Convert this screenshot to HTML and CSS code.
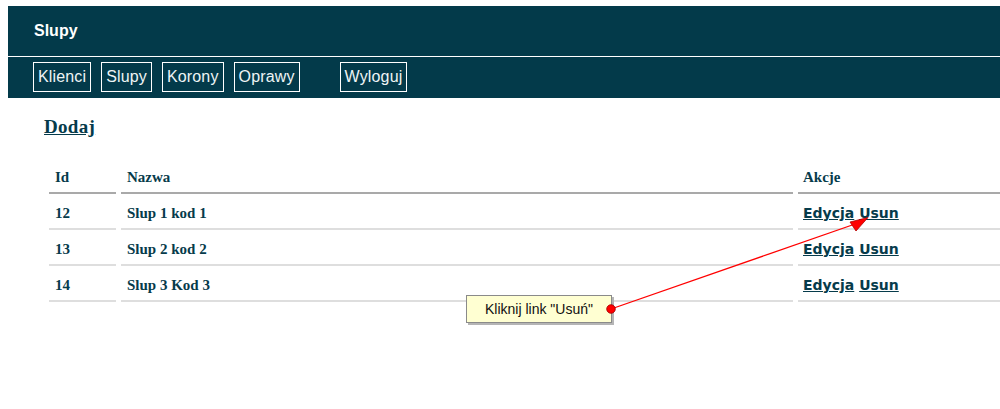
FILE: index.html
```html
<!DOCTYPE html>
<html lang="pl">
<head>
<meta charset="utf-8">
<title>Slupy</title>
<link rel="stylesheet" href="styles.css">
</head>
<body>
<div class="page">
  <header class="top">
    <div class="title">Slupy</div>
    <nav class="nav">
      <a class="nav-btn" href="#">Klienci</a>
      <a class="nav-btn" href="#">Slupy</a>
      <a class="nav-btn" href="#">Korony</a>
      <a class="nav-btn" href="#">Oprawy</a>
      <a class="nav-btn nav-logout" href="#">Wyloguj</a>
    </nav>
  </header>
  <main class="content">
    <a class="add-link" href="#">Dodaj</a>
    <table class="grid">
      <thead>
        <tr>
          <th class="col-id">Id</th>
          <th class="col-name">Nazwa</th>
          <th class="col-act">Akcje</th>
        </tr>
      </thead>
      <tbody>
        <tr>
          <td>12</td>
          <td>Slup 1 kod 1</td>
          <td class="acts"><a href="#">Edycja</a> <a href="#">Usun</a></td>
        </tr>
        <tr>
          <td>13</td>
          <td>Slup 2 kod 2</td>
          <td class="acts"><a href="#">Edycja</a> <a href="#">Usun</a></td>
        </tr>
        <tr>
          <td>14</td>
          <td>Slup 3 Kod 3</td>
          <td class="acts"><a href="#">Edycja</a> <a href="#">Usun</a></td>
        </tr>
      </tbody>
    </table>
  </main>
</div>

<div class="callout">Kliknij link "Usuń"</div>
<svg class="pointer" width="1000" height="409" viewBox="0 0 1000 409" xmlns="http://www.w3.org/2000/svg">
  <line x1="611" y1="309" x2="858" y2="223" stroke="#ff0000" stroke-width="1.3"/>
  <polygon points="868,217.5 850,222 856,231" fill="#ff0000" stroke="#b00000" stroke-width="0.8"/>
  <circle cx="611" cy="309" r="4.3" fill="#ff0000" stroke="#a00000" stroke-width="0.8"/>
</svg>
</body>
</html>
```

FILE: styles.css
```css
html {
  overflow: hidden;
}

body {
  margin: 6px 0 0 8px;
  background: #ffffff;
  font-family: "Liberation Sans", Arial, sans-serif;
}

.page {
  overflow: hidden;
}

.top {
  background: #033a4a;
  color: #ffffff;
}

.title {
  height: 50px;
  line-height: 50px;
  padding-left: 26px;
  font-size: 16px;
  font-weight: bold;
  border-bottom: 1px solid #ffffff;
}

.nav {
  display: flex;
  gap: 10px;
  padding: 5px 25px 6px;
}

.nav-btn {
  display: block;
  border: 1px solid #ffffff;
  padding: 5px 4px;
  line-height: 18px;
  font-size: 16px;
  letter-spacing: 0.15px;
  color: #eef4f5;
  text-decoration: none;
}

.nav-logout {
  margin-left: 30px;
}

.content {
  padding: 18px 0 0 36px;
}

.add-link {
  display: block;
  width: max-content;
  font-family: "Liberation Serif", "Times New Roman", serif;
  font-size: 19px;
  line-height: 22px;
  font-weight: bold;
  letter-spacing: 0.3px;
  color: #063b4b;
  text-decoration: underline;
  margin-bottom: 20px;
}

.grid {
  width: 961px;
  margin-right: -5px;
  table-layout: fixed;
  border-collapse: separate;
  border-spacing: 5px;
  font-family: "Liberation Serif", "Times New Roman", serif;
  font-size: 15px;
  font-weight: bold;
  color: #063b4b;
}

.grid th,
.grid td {
  text-align: left;
  padding: 6px 6px;
  line-height: 17px;
  vertical-align: middle;
  white-space: nowrap;
}

.grid th {
  border-bottom: 2px solid #a9a9a9;
}

.grid td {
  border-bottom: 2px solid #dedede;
}

.col-id {
  width: 55px;
}

.col-name {
  width: 660px;
}

.grid th.col-act,
.grid td.acts {
  padding-left: 5px;
}

.acts {
  font-family: "DejaVu Sans", Verdana, sans-serif;
  font-size: 14px;
}

.acts a {
  color: #063b4b;
  text-decoration: underline;
}

.callout {
  position: absolute;
  left: 466px;
  top: 295px;
  width: 144px;
  height: 26px;
  border: 1px solid #8a8a8a;
  background: #ffffd2;
  box-shadow: 2px 2px 0 #b5b5b5;
  font-family: "Liberation Sans", Arial, sans-serif;
  font-size: 14px;
  line-height: 26px;
  text-align: center;
  color: #111111;
}

.pointer {
  position: absolute;
  left: 0;
  top: 0;
  pointer-events: none;
}
```
